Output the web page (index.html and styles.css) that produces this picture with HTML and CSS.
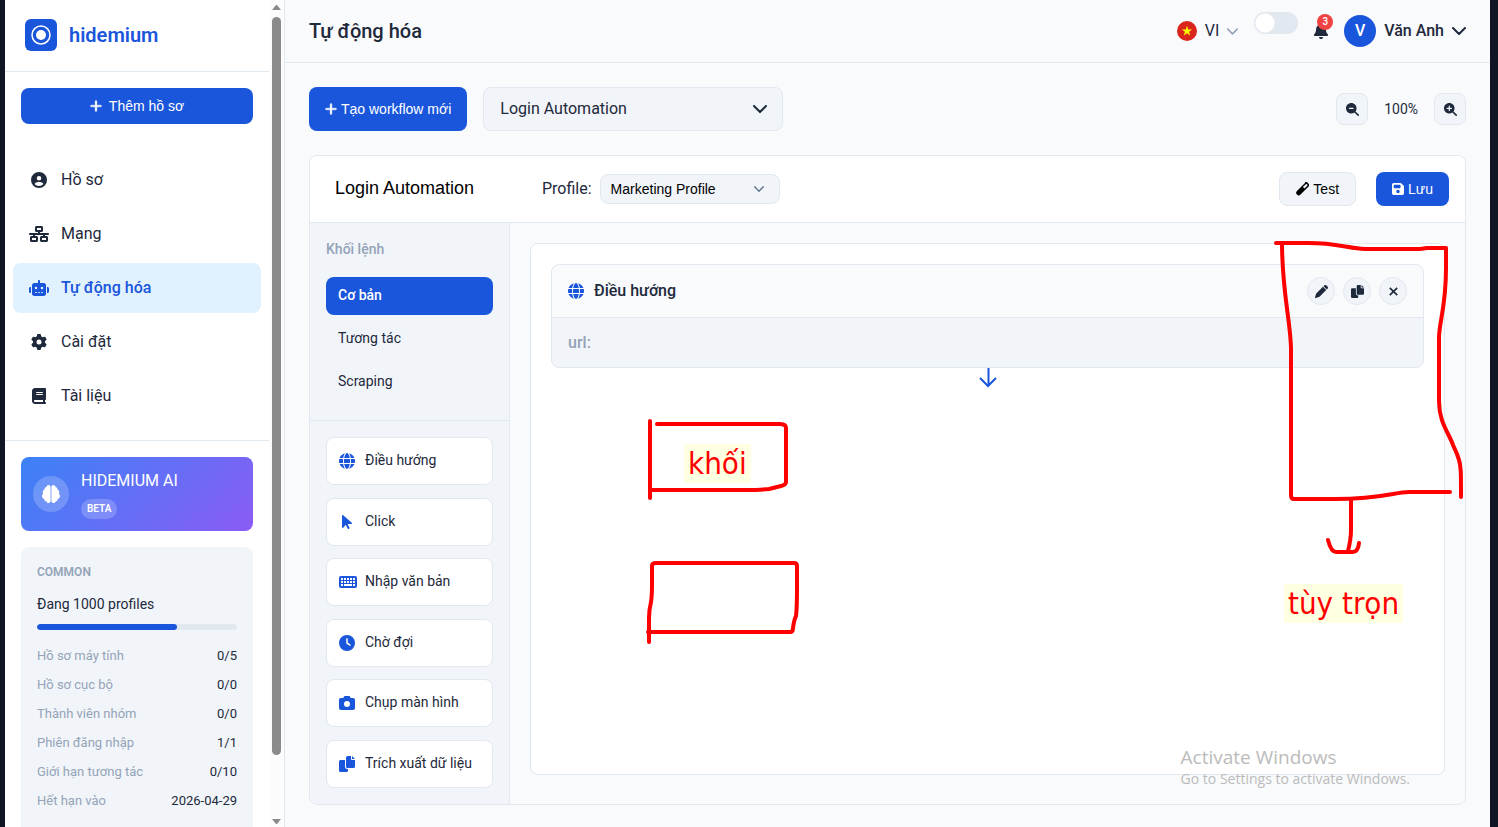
FILE: index.html
```html
<!DOCTYPE html>
<html lang="vi">
<head>
<meta charset="utf-8">
<meta name="viewport" content="width=device-width, initial-scale=1">
<title>Hidemium - Tự động hóa</title>
<link rel="stylesheet" href="styles.css">
</head>
<body>
<svg class="sprite" aria-hidden="true">
  <symbol id="plus" viewBox="0 0 448 512"><path d="M256 80c0-17.700-14.300-32-32-32s-32 14.300-32 32V224H48c-17.700 0-32 14.300-32 32s14.300 32 32 32H192V432c0 17.700 14.300 32 32 32s32-14.300 32-32V288H400c17.700 0 32-14.300 32-32s-14.300-32-32-32H256V80z"/></symbol>
  <symbol id="user" viewBox="0 0 512 512"><path d="M399 384.200C376.900 345.800 335.400 320 288 320H224c-47.400 0-88.900 25.800-111 64.200c35.200 39.200 86.200 63.800 143 63.800s107.800-24.700 143-63.800zM0 256a256 256 0 1 1 512 0A256 256 0 1 1 0 256zm256 16a72 72 0 1 0 0-144 72 72 0 1 0 0 144z"/></symbol>
  <symbol id="network" viewBox="0 0 640 512"><path d="M256 64H384v64H256V64zM240 0c-26.500 0-48 21.500-48 48v96c0 26.500 21.500 48 48 48h48v32H32c-17.700 0-32 14.300-32 32s14.300 32 32 32h96v32H80c-26.500 0-48 21.500-48 48v96c0 26.500 21.500 48 48 48H240c26.500 0 48-21.500 48-48V368c0-26.500-21.500-48-48-48H192V288H448v32H400c-26.500 0-48 21.500-48 48v96c0 26.500 21.500 48 48 48H560c26.500 0 48-21.500 48-48V368c0-26.500-21.500-48-48-48H512V288h96c17.700 0 32-14.300 32-32s-14.300-32-32-32H352V192h48c26.500 0 48-21.500 48-48V48c0-26.500-21.500-48-48-48H240zM96 448V384H224v64H96zm320-64H544v64H416V384z"/></symbol>
  <symbol id="robot" viewBox="0 0 640 512"><path d="M320 0c17.700 0 32 14.300 32 32V96H472c39.800 0 72 32.200 72 72V440c0 39.800-32.200 72-72 72H168c-39.800 0-72-32.200-72-72V168c0-39.800 32.200-72 72-72H288V32c0-17.700 14.300-32 32-32zM208 384c-8.800 0-16 7.200-16 16s7.200 16 16 16h32c8.800 0 16-7.200 16-16s-7.200-16-16-16H208zm96 0c-8.800 0-16 7.200-16 16s7.200 16 16 16h32c8.800 0 16-7.200 16-16s-7.200-16-16-16H304zm96 0c-8.800 0-16 7.200-16 16s7.200 16 16 16h32c8.800 0 16-7.200 16-16s-7.200-16-16-16H400zM264 256a40 40 0 1 0 -80 0 40 40 0 1 0 80 0zm152 40a40 40 0 1 0 0-80 40 40 0 1 0 0 80zM48 224H64V416H48c-26.500 0-48-21.500-48-48V272c0-26.500 21.500-48 48-48zm544 0c26.500 0 48 21.500 48 48v96c0 26.500-21.500 48-48 48H576V224h16z"/></symbol>
  <symbol id="gear" viewBox="0 0 512 512"><path d="M495.900 166.600c3.200 8.700 .5 18.400-6.400 24.600l-43.300 39.400c1.100 8.300 1.700 16.800 1.700 25.400s-.6 17.100-1.700 25.400l43.300 39.400c6.900 6.200 9.600 15.900 6.400 24.600c-4.400 11.900-9.700 23.300-15.800 34.300l-4.700 8.100c-6.600 11-14 21.400-22.100 31.200c-5.900 7.200-15.700 9.600-24.500 6.800l-55.700-17.700c-13.400 10.300-28.200 18.900-44 25.400l-12.500 57.100c-2 9.100-9 16.300-18.200 17.800c-13.800 2.300-28 3.500-42.500 3.500s-28.700-1.200-42.500-3.500c-9.200-1.500-16.200-8.700-18.200-17.800l-12.500-57.100c-15.800-6.500-30.600-15.100-44-25.400L83.100 425.900c-8.800 2.800-18.600 .3-24.500-6.800c-8.100-9.800-15.500-20.200-22.100-31.200l-4.700-8.100c-6.100-11-11.400-22.400-15.800-34.300c-3.200-8.700-.5-18.400 6.400-24.600l43.300-39.400C64.600 273.100 64 264.600 64 256s.6-17.100 1.700-25.400L22.400 191.200c-6.900-6.200-9.600-15.900-6.400-24.600c4.400-11.900 9.700-23.300 15.800-34.300l4.700-8.100c6.600-11 14-21.400 22.100-31.200c5.900-7.200 15.700-9.600 24.500-6.800l55.700 17.700c13.400-10.300 28.200-18.900 44-25.400l12.500-57.100c2-9.100 9-16.300 18.200-17.800C227.300 1.200 241.500 0 256 0s28.700 1.200 42.500 3.500c9.200 1.500 16.200 8.700 18.200 17.800l12.500 57.100c15.800 6.500 30.600 15.100 44 25.400l55.700-17.700c8.800-2.800 18.600-.3 24.500 6.800c8.100 9.800 15.500 20.200 22.100 31.200l4.700 8.100c6.100 11 11.400 22.400 15.800 34.300zM256 336a80 80 0 1 0 0-160 80 80 0 1 0 0 160z"/></symbol>
  <symbol id="book" viewBox="0 0 448 512"><path d="M96 0C43 0 0 43 0 96V416c0 53 43 96 96 96H384h32c17.700 0 32-14.300 32-32s-14.300-32-32-32V384c17.700 0 32-14.300 32-32V32c0-17.700-14.300-32-32-32H384 96zm0 384H352v64H96c-17.700 0-32-14.300-32-32s14.300-32 32-32zm32-240c0-8.800 7.200-16 16-16H336c8.800 0 16 7.200 16 16s-7.200 16-16 16H144c-8.800 0-16-7.200-16-16zm16 48H336c8.800 0 16 7.200 16 16s-7.200 16-16 16H144c-8.800 0-16-7.200-16-16s7.200-16 16-16z"/></symbol>
  <symbol id="brain" viewBox="0 0 512 512"><path d="M190 0c28 0 54 22 54 56v400c0 34-26 56-54 56-32 0-56-16-64-44-36-4-64-32-66-68-34-14-60-48-60-88 0-28 12-50 30-66-6-12-8-24-8-36 0-36 18-66 48-80 0-34 22-60 54-70 12-36 34-60 66-60zM322 0c-28 0-54 22-54 56v400c0 34 26 56 54 56 32 0 56-16 64-44 36-4 64-32 66-68 34-14 60-48 60-88 0-28-12-50-30-66 6-12 8-24 8-36 0-36-18-66-48-80 0-34-22-60-54-70-12-36-34-60-66-60z"/></symbol>
  <symbol id="bell" viewBox="0 0 448 512"><path d="M224 0c-17.700 0-32 14.300-32 32V51.200C119 66 64 130.600 64 208v18.800c0 47-17.300 92.400-48.500 127.600l-7.400 8.300c-8.400 9.400-10.400 22.900-5.300 34.400S19.400 416 32 416H416c12.600 0 24-7.400 29.200-18.900s3.100-25-5.300-34.400l-7.400-8.300C401.300 319.200 384 273.900 384 226.800V208c0-77.400-55-142-128-156.800V32c0-17.700-14.300-32-32-32zm45.300 493.300c12-12 18.700-28.300 18.700-45.300H224 160c0 17 6.700 33.300 18.700 45.300s28.300 18.700 45.300 18.700s33.300-6.700 45.300-18.700z"/></symbol>
  <symbol id="globe" viewBox="0 0 512 512"><path d="M352 256c0 22.200-1.200 43.600-3.300 64H163.300c-2.200-20.400-3.300-41.800-3.300-64s1.200-43.600 3.300-64H348.700c2.200 20.400 3.300 41.800 3.300 64zm28.800-64H503.900c5.300 20.500 8.100 41.900 8.100 64s-2.800 43.500-8.100 64H380.800c2.100-20.600 3.200-42 3.200-64s-1.100-43.400-3.200-64zm112.600-32H376.700c-10-63.900-29.800-117.400-55.300-151.600c78.300 20.700 142 77.500 171.900 151.600zm-149.100 0H167.700c6.100-36.400 15.500-68.600 27-94.700c10.500-23.600 22.200-40.700 33.500-51.500C239.400 3.200 248.700 0 256 0s16.600 3.200 27.800 13.800c11.300 10.800 23 27.900 33.500 51.500c11.600 26 20.900 58.200 27 94.700zm-209 0H18.600C48.600 85.900 112.200 29.100 190.600 8.400C165.100 42.600 145.300 96.100 135.300 160zM8.100 192H131.200c-2.100 20.600-3.200 42-3.200 64s1.100 43.400 3.200 64H8.100C2.800 299.500 0 278.100 0 256s2.800-43.500 8.100-64zM194.700 446.600c-11.600-26-20.900-58.200-27-94.600H344.300c-6.100 36.400-15.500 68.600-27 94.600c-10.500 23.600-22.200 40.700-33.500 51.500C272.600 508.800 263.300 512 256 512s-16.600-3.200-27.800-13.800c-11.300-10.800-23-27.900-33.500-51.500zM135.300 352c10 63.900 29.800 117.400 55.300 151.600C112.200 482.900 48.600 426.100 18.600 352H135.300zm358.100 0c-30 74.100-93.600 130.900-171.900 151.600c25.500-34.200 45.200-87.700 55.300-151.600H493.400z"/></symbol>
  <symbol id="pointer" viewBox="0 0 320 512"><path d="M0 55.200V426c0 12.200 9.900 22 22 22c6.300 0 12.400-2.700 16.600-7.500L121.200 346l58.100 116.300c7.900 15.800 27.100 22.200 42.900 14.300s22.200-27.100 14.300-42.900L179.800 320H297.900c12.200 0 22.100-9.900 22.100-22.100c0-6.300-2.700-12.300-7.400-16.500L38.600 37.900C34.300 34.100 28.900 32 23.200 32C10.400 32 0 42.400 0 55.200z"/></symbol>
  <symbol id="keyboard" viewBox="0 0 18 16"><path fill-rule="evenodd" d="M2 2h14a2 2 0 0 1 2 2v8a2 2 0 0 1-2 2H2a2 2 0 0 1-2-2V4a2 2 0 0 1 2-2zM2 4v2h2V4zM5 4v2h2V4zM8 4v2h2V4zM11 4v2h2V4zM14 4v2h2V4zM2 7v2h2V7zM5 7v2h2V7zM8 7v2h2V7zM11 7v2h2V7zM14 7v2h2V7zM2 10v2h2v-2zM5 10v2h8v-2zM14 10v2h2v-2z"/></symbol>
  <symbol id="clock" viewBox="0 0 512 512"><path d="M256 0a256 256 0 1 1 0 512A256 256 0 1 1 256 0zM232 120V256c0 8 4 15.500 10.700 20l96 64c11 7.400 25.900 4.400 33.300-6.700s4.400-25.900-6.700-33.300L280 243.200V120c0-13.300-10.700-24-24-24s-24 10.700-24 24z"/></symbol>
  <symbol id="camera" viewBox="0 0 512 512"><path d="M149.100 64.800L138.700 96H64C28.700 96 0 124.700 0 160V416c0 35.300 28.700 64 64 64H448c35.300 0 64-28.700 64-64V160c0-35.300-28.700-64-64-64H373.300L362.900 64.800C356.400 45.200 338.100 32 317.400 32H194.600c-20.700 0-39 13.200-45.500 32.800zM256 192a96 96 0 1 1 0 192 96 96 0 1 1 0-192z"/></symbol>
  <symbol id="copy" viewBox="0 0 512 512"><path d="M272 0h112v96q0 32 32 32h96v208q0 48-48 48H272q-48 0-48-48V48q0-48 48-48zM416 0v96h96zM48 128h144v208q0 80 80 80h16v48q0 48-48 48H48q-48 0-48-48V176q0-48 48-48z"/></symbol>
  <symbol id="zoom-out" viewBox="0 0 512 512"><path d="M416 208c0 45.900-14.900 88.300-40 122.700L502.600 457.400c12.500 12.500 12.500 32.800 0 45.300s-32.800 12.500-45.300 0L330.700 376c-34.400 25.200-76.800 40-122.700 40C93.100 416 0 322.900 0 208S93.100 0 208 0S416 93.100 416 208zM136 184c-13.300 0-24 10.700-24 24s10.700 24 24 24H280c13.300 0 24-10.700 24-24s-10.700-24-24-24H136z"/></symbol>
  <symbol id="zoom-in" viewBox="0 0 512 512"><path d="M416 208c0 45.900-14.900 88.300-40 122.700L502.600 457.400c12.500 12.500 12.500 32.800 0 45.300s-32.800 12.500-45.300 0L330.700 376c-34.400 25.200-76.800 40-122.700 40C93.100 416 0 322.900 0 208S93.100 0 208 0S416 93.100 416 208zM184 296c0 13.300 10.700 24 24 24s24-10.700 24-24V232h64c13.300 0 24-10.700 24-24s-10.700-24-24-24H232V120c0-13.300-10.700-24-24-24s-24 10.700-24 24v64H120c-13.300 0-24 10.700-24 24s10.700 24 24 24h64v64z"/></symbol>
  <symbol id="save" viewBox="0 0 448 512"><path d="M64 32C28.700 32 0 60.700 0 96V416c0 35.300 28.700 64 64 64H384c35.300 0 64-28.700 64-64V173.300c0-17-6.700-33.300-18.700-45.300L352 50.700C340 38.700 323.700 32 306.700 32H64zm0 96c0-17.700 14.300-32 32-32H288c17.700 0 32 14.300 32 32v64c0 17.700-14.300 32-32 32H96c-17.700 0-32-14.300-32-32V128zM224 288a64 64 0 1 1 0 128 64 64 0 1 1 0-128z"/></symbol>
  <symbol id="vial" viewBox="0 0 512 512"><g transform="rotate(45 256 256)"><path fill-rule="evenodd" d="M156-60h200a32 32 0 0 1 0 64v460a100 100 0 0 1-200 0V4a32 32 0 0 1 0-64zM216 4v186h80V4z"/></g></symbol>
  <symbol id="pencil" viewBox="0 0 512 512"><path d="M362.700 19.300L334.300 47.700 464.300 177.700l28.400-28.400c25-25 25-65.500 0-90.500L453.300 19.300c-25-25-65.500-25-90.500 0zM312 70L58.600 323.500c-10.400 10.400-18 23.300-22.200 37.400L1 481.200C-1.500 489.700 .8 498.800 7 505s15.300 8.500 23.700 6.100l120.300-35.400c14.100-4.200 27-11.800 37.400-22.200L442 200z"/></symbol>
  <symbol id="chevron" viewBox="0 0 14 8"><path d="M1 1l6 6 6-6" fill="none" stroke="currentColor" stroke-width="2" stroke-linecap="round" stroke-linejoin="round"/></symbol>
</svg>

<div class="app">
  <aside class="sidebar">
    <div class="sidebar-body">
      <div class="brand">
        <svg class="logo" viewBox="0 0 32 32" aria-hidden="true"><rect width="32" height="32" rx="6" fill="#1a56db"/><circle cx="16" cy="16" r="9" fill="none" stroke="#fff" stroke-width="1.500"/><circle cx="16" cy="16" r="5" fill="#fff"/></svg>
        <span>hidemium</span>
      </div>
      <div class="add">
        <button class="primary add-button" type="button"><svg class="icon"><use href="#plus"/></svg>Thêm hồ sơ</button>
      </div>
      <nav class="nav">
        <a href="#ho-so"><svg class="icon"><use href="#user"/></svg>Hồ sơ</a>
        <a href="#mang"><svg class="icon"><use href="#network"/></svg>Mạng</a>
        <a href="#tu-dong-hoa" class="active"><svg class="icon"><use href="#robot"/></svg>Tự động hóa</a>
        <a href="#cai-dat"><svg class="icon"><use href="#gear"/></svg>Cài đặt</a>
        <a href="#tai-lieu"><svg class="icon"><use href="#book"/></svg>Tài liệu</a>
      </nav>
      <div class="cards">
        <div class="ai">
          <span class="ai-icon"><svg class="icon"><use href="#brain"/></svg></span>
          <div><div class="ai-title">HIDEMIUM AI</div><span class="beta">BETA</span></div>
        </div>
        <section class="plan">
          <h2>COMMON</h2>
          <p>Đang 1000 profiles</p>
          <div class="bar"><div class="fill" style="width:70%"></div></div>
          <dl>
            <div><dt>Hồ sơ máy tính</dt><dd>0/5</dd></div>
            <div><dt>Hồ sơ cục bộ</dt><dd>0/0</dd></div>
            <div><dt>Thành viên nhóm</dt><dd>0/0</dd></div>
            <div><dt>Phiên đăng nhập</dt><dd>1/1</dd></div>
            <div><dt>Giới hạn tương tác</dt><dd>0/10</dd></div>
            <div><dt>Hết hạn vào</dt><dd>2026-04-29</dd></div>
          </dl>
        </section>
      </div>
    </div>
    <div class="scrollbar" aria-hidden="true">
      <svg viewBox="0 0 9 5"><path d="M0 5h9L5 0H4z"/></svg>
      <div class="track"><div class="thumb"></div></div>
      <svg viewBox="0 0 9 5"><path d="M0 0h9L5 5H4z"/></svg>
    </div>
  </aside>

  <main class="main">
    <header class="topbar">
      <h1>Tự động hóa</h1>
      <div class="tools">
        <button class="plain" type="button">
          <svg class="flag" viewBox="0 0 20 20" aria-hidden="true"><circle cx="10" cy="10" r="10" fill="#da251d"/><path fill="#ff0" d="M10 4.700l1.250 3.700h3.900L12 10.700l1.200 3.800L10 12.200l-3.200 2.300L8 10.700 4.850 8.400h3.900z"/></svg>
          VI<svg class="chev-s"><use href="#chevron"/></svg>
        </button>
        <input class="switch" type="checkbox" role="switch" aria-label="Chế độ tối">
        <button class="plain bell" type="button" aria-label="Thông báo"><svg><use href="#bell"/></svg><span class="badge">3</span></button>
        <button class="plain account" type="button"><span class="avatar">V</span>Văn Anh<svg class="chev-m"><use href="#chevron"/></svg></button>
      </div>
    </header>

    <div class="content">
      <div class="toolbar">
        <button class="primary create" type="button"><svg class="icon"><use href="#plus"/></svg>Tạo workflow mới</button>
        <div class="select workflow">
          <select aria-label="Workflow"><option>Login Automation</option></select>
          <svg class="chev-m"><use href="#chevron"/></svg>
        </div>
        <div class="zoom">
          <button type="button" aria-label="Thu nhỏ"><svg><use href="#zoom-out"/></svg></button>
          <span>100%</span>
          <button type="button" aria-label="Phóng to"><svg><use href="#zoom-in"/></svg></button>
        </div>
      </div>

      <section class="editor">
        <div class="editor-head">
          <input class="name" type="text" value="Login Automation" aria-label="Tên workflow">
          <label for="profile">Profile:</label>
          <div class="select profile">
            <select id="profile"><option>Marketing Profile</option></select>
            <svg class="chev-s"><use href="#chevron"/></svg>
          </div>
          <div class="actions">
            <button class="test" type="button"><svg class="icon"><use href="#vial"/></svg>Test</button>
            <button class="primary save" type="button"><svg class="icon"><use href="#save"/></svg>Lưu</button>
          </div>
        </div>
        <div class="editor-body">
          <div class="palette">
            <div class="groups">
              <h2>Khối lệnh</h2>
              <button class="active" type="button">Cơ bản</button>
              <button type="button">Tương tác</button>
              <button type="button">Scraping</button>
            </div>
            <div class="blocks">
              <button type="button"><svg class="icon"><use href="#globe"/></svg>Điều hướng</button>
              <button type="button"><svg class="icon"><use href="#pointer"/></svg>Click</button>
              <button type="button"><svg class="icon wide"><use href="#keyboard"/></svg>Nhập văn bản</button>
              <button type="button"><svg class="icon"><use href="#clock"/></svg>Chờ đợi</button>
              <button type="button"><svg class="icon"><use href="#camera"/></svg>Chụp màn hình</button>
              <button type="button"><svg class="icon"><use href="#copy"/></svg>Trích xuất dữ liệu</button>
            </div>
          </div>
          <div class="stage">
            <div class="canvas">
              <article class="node">
                <div class="node-head">
                  <svg class="icon"><use href="#globe"/></svg>
                  <h3>Điều hướng</h3>
                  <button type="button" aria-label="Sửa"><svg><use href="#pencil"/></svg></button>
                  <button type="button" aria-label="Sao chép"><svg><use href="#copy"/></svg></button>
                  <button type="button" aria-label="Xóa"><svg viewBox="0 0 14 14"><path d="M3 3l8 8M11 3l-8 8" stroke="currentColor" stroke-width="1.800"/></svg></button>
                </div>
                <div class="node-body">url:</div>
              </article>
              <svg class="arrow" viewBox="0 0 18 20" aria-hidden="true"><path d="M9.500 0v18M1 10l8 8 8-8" fill="none" stroke="#1a56db" stroke-width="2"/></svg>
            </div>
          </div>
        </div>
      </section>
    </div>
  </main>

  <svg class="ink" aria-hidden="true">
    <path d="M650 421V498M657 424H780q6 0 6 4v54q0 3-5 4l-12 3q-8 1-24 1H651"/>
    <path d="M649 642v-24q0-8 2-16 1-6 1-18v-18q0-3 4-3h138q3 0 3 3v22q0 20-1 28-2 4-3 12 0 4-3 4H648"/>
    <path d="M1276 243h32c32 0 40 6 62 6h50l7-1h19v20c0 40-7 54-7 70v63c0 22 10 32 14 44l4 9 2 6c2 6 2 12 2 37M1282 243c0 50 9 80 9 107v145q0 4 3 4h40c50 0 60-7 75-7h41"/>
    <path d="M1351 500v30q0 9-3 21M1328 540q3 12 8 12h17q5 0 6-9"/>
  </svg>
  <span class="note note-block">khối</span>
  <span class="note note-option">tùy trọn</span>
  <div class="watermark"><div>Activate Windows</div><p>Go to Settings to activate Windows.</p></div>
</div>
</body>
</html>
```
FILE: styles.css
```css
:root {
  --blue: #1a56db;
  --ink: #1e293b;
  --muted: #94a3b8;
  --line: #e2e8f0;
  --soft: #f1f5f9;
  --page: #f8fafc;
}
* { box-sizing: border-box; }
body {
  margin: 0;
  background: #0f1523;
  color: var(--ink);
  font: 16px/24px Roboto, "Open Sans", sans-serif;
}
h1, h2, h3, p, dl, dd { margin: 0; }
button, select, input { font: inherit; color: inherit; }
button {
  display: flex;
  align-items: center;
  border: 0;
  background: none;
  padding: 0;
  cursor: pointer;
}
svg { display: block; fill: currentColor; flex: none; }
.sprite { display: none; }

.app {
  position: relative;
  display: grid;
  grid-template-columns: 280px 1fr;
  height: 100vh;
  padding: 0 8px 0 5px;
  overflow: hidden;
}
.primary {
  justify-content: center;
  background: var(--blue);
  color: #fff;
  border-radius: 8px;
  font: 14px/20px "Liberation Sans", Arial, sans-serif;
}
.icon { width: 16px; height: 16px; }

/* Sidebar */
.sidebar {
  display: grid;
  grid-template-columns: 1fr 15px;
  min-height: 0;
  background: #fff;
  border-right: 1px solid var(--line);
}
.sidebar-body { overflow: hidden; }
.brand {
  display: flex;
  align-items: center;
  gap: 12px;
  padding: 19px 20px 20px;
  border-bottom: 1px solid var(--line);
  color: var(--blue);
  font-size: 20px;
  font-weight: 600;
}
.logo { width: 32px; height: 32px; }
.add { padding: 16px; }
.add-button { width: 100%; height: 36px; gap: 7px; }
.nav {
  display: flex;
  flex-direction: column;
  gap: 4px;
  padding: 15px 8px 19px;
  border-bottom: 1px solid var(--line);
}
.nav a {
  display: flex;
  align-items: center;
  gap: 12px;
  padding: 13px 16px;
  border-radius: 8px;
  color: inherit;
  text-decoration: none;
}
.nav .icon { width: 20px; }
.nav .active { background: #e1f1fe; color: var(--blue); font-weight: 500; }
.cards { display: grid; gap: 16px; padding: 16px; }
.ai {
  display: flex;
  align-items: center;
  gap: 12px;
  padding: 12px;
  border-radius: 8px;
  background: linear-gradient(135deg, #3b82f6, #8b5cf6);
  color: #fff;
}
.ai-icon {
  display: grid;
  place-items: center;
  width: 36px;
  height: 36px;
  border-radius: 50%;
  background: rgba(255, 255, 255, .2);
}
.ai-icon .icon { width: 18px; height: 18px; }
.ai-title { margin-bottom: 6px; }
.beta {
  display: block;
  width: max-content;
  padding: 0 6px;
  border-radius: 10px;
  background: rgba(255, 255, 255, .2);
  font-size: 10px;
  line-height: 20px;
  font-weight: 600;
}
.plan { padding: 16px 16px 32px; border-radius: 8px; background: var(--soft); }
.plan h2 { color: var(--muted); font-size: 12px; line-height: 18px; font-weight: 600; }
.plan p { margin: 12px 0 9px; font-size: 14px; line-height: 22px; }
.bar { height: 6px; border-radius: 3px; background: var(--line); overflow: hidden; }
.fill { height: 100%; border-radius: 3px; background: var(--blue); }
.plan dl { display: grid; gap: 8px; margin-top: 15px; font-size: 13px; line-height: 21px; }
.plan dl div { display: flex; justify-content: space-between; }
.plan dt { color: var(--muted); }
.scrollbar {
  display: flex;
  flex-direction: column;
  align-items: center;
  padding: 5px 0 3px;
  background: #fcfcfc;
  color: #8b8b8b;
}
.scrollbar svg { width: 9px; height: 5px; }
.track { flex: 1; padding: 7px 0 0; }
.thumb { width: 9px; height: 92%; border-radius: 5px; background: #8b8b8b; }

/* Top bar */
.main { display: flex; flex-direction: column; min-width: 0; background: var(--page); }
.topbar {
  display: flex;
  justify-content: space-between;
  align-items: center;
  padding: 12px 24px;
  border-bottom: 1px solid var(--line);
}
.topbar h1 { font-size: 20px; line-height: 38px; font-weight: 500; }
.tools { display: flex; align-items: center; gap: 16px; height: 38px; }
.plain { gap: 8px; }
.flag { width: 20px; height: 20px; }
.chev-s { width: 11px; height: 7px; color: var(--muted); }
.chev-m { width: 14px; height: 8px; }
.switch {
  appearance: none;
  align-self: flex-start;
  width: 44px;
  height: 22px;
  margin: 0;
  border-radius: 11px;
  background: radial-gradient(circle at 11px 11px, #fff 9px, transparent 10px) var(--line);
}
.bell { position: relative; }
.bell svg { width: 14px; height: 16px; }
.badge {
  position: absolute;
  left: 3px;
  bottom: 9px;
  width: 16px;
  border-radius: 50%;
  background: #ef4444;
  color: #fff;
  font-size: 10px;
  line-height: 16px;
  font-weight: 500;
  text-align: center;
}
.account { font-weight: 500; }
.avatar {
  width: 32px;
  border-radius: 50%;
  background: var(--blue);
  color: #fff;
  line-height: 32px;
  text-align: center;
}

/* Toolbar */
.content {
  display: flex;
  flex: 1;
  flex-direction: column;
  gap: 24px;
  min-height: 0;
  padding: 24px 24px 22px;
}
.toolbar { display: flex; align-items: center; gap: 16px; }
.create { height: 44px; padding: 0 16px; gap: 4px; }
.create .icon, .add-button .icon, .actions .icon { width: 12px; height: 14px; }
.create .icon path, .add-button .icon path { stroke: currentColor; }
.create .icon, .add-button .icon { stroke: currentColor; stroke-width: 16; }
.select { position: relative; }
.select select {
  appearance: none;
  width: 100%;
  border: 1px solid var(--line);
  border-radius: 8px;
  background: var(--soft);
}
.select svg { position: absolute; top: 50%; translate: 0 -50%; pointer-events: none; }
.workflow { width: 300px; }
.workflow select { height: 44px; padding: 0 16px; }
.workflow svg { right: 16px; }
.zoom { display: flex; align-items: center; gap: 16px; margin-left: auto; font-size: 14px; }
.zoom button {
  justify-content: center;
  width: 32px;
  height: 32px;
  border: 1px solid var(--line);
  border-radius: 8px;
  background: var(--soft);
}
.zoom svg { width: 13px; height: 13px; }

/* Editor */
.editor {
  display: flex;
  flex: 1;
  flex-direction: column;
  min-height: 0;
  border: 1px solid var(--line);
  border-radius: 8px;
  overflow: hidden;
}
.editor-head {
  display: flex;
  align-items: center;
  padding: 16px;
  border-bottom: 1px solid var(--line);
  background: #fff;
}
.name {
  width: 200px;
  margin-right: 16px;
  padding: 0 9px 2px;
  border: 0;
  background: none;
  color: #000;
  font: 18px/32px "Liberation Sans", Arial, sans-serif;
}
.profile { width: 180px; margin-left: 8px; }
.profile select {
  height: 30px;
  padding: 0 10px;
  color: #000;
  font: 14px/20px "Liberation Sans", Arial, sans-serif;
}
.profile svg { right: 16px; width: 10px; height: 6px; color: #64748b; }
.actions { display: flex; gap: 20px; margin-left: auto; }
.actions button { height: 34px; padding: 0 16px; gap: 4px; }
.test {
  border: 1px solid var(--line);
  border-radius: 8px;
  background: var(--soft);
  color: #000;
  font: 14px/20px "Liberation Sans", Arial, sans-serif;
}
.actions .test .icon { width: 13px; }
.editor-body { display: grid; flex: 1; grid-template-columns: 200px 1fr; min-height: 0; }
.palette {
  display: flex;
  flex-direction: column;
  border-right: 1px solid var(--line);
  background: var(--soft);
  font-size: 14px;
}
.groups {
  display: grid;
  gap: 5px;
  padding: 16px 16px 19px;
  border-bottom: 1px solid var(--line);
}
.groups h2 { margin-bottom: 12px; color: var(--muted); font-size: 14px; line-height: 21px; font-weight: 500; }
.groups button { height: 38px; padding: 0 12px 3px; border-radius: 8px; }
.groups .active { background: var(--blue); color: #fff; font-weight: 500; }
.blocks { display: flex; flex: 1; flex-direction: column; justify-content: space-between; padding: 16px; }
.blocks button {
  height: 48px;
  padding: 0 12px 2px;
  gap: 10px;
  border: 1px solid var(--line);
  border-radius: 8px;
  background: #fff;
}
.blocks .icon { margin-top: 2px; color: var(--blue); }
.blocks .wide { width: 18px; margin-right: -2px; }
.stage { display: flex; padding: 20px 20px 29px; }
.canvas { flex: 1; padding: 20px; border: 1px solid var(--line); border-radius: 8px; background: #fff; }
.node { border: 1px solid var(--line); border-radius: 8px; background: var(--soft); overflow: hidden; }
.node-head {
  display: flex;
  align-items: center;
  gap: 8px;
  padding: 12px 16px;
  border-bottom: 1px solid var(--line);
  background: var(--page);
}
.node-head .icon { margin-right: 2px; color: var(--blue); }
.node-head h3 { margin-right: auto; font-size: 16px; line-height: 24px; font-weight: 500; }
.node-head button {
  justify-content: center;
  width: 28px;
  height: 28px;
  border: 1px solid var(--line);
  border-radius: 50%;
  background: var(--soft);
}
.node-head button svg { width: 13px; height: 13px; }
.node-body { padding: 13px 16px 12px; color: var(--muted); font-weight: 500; }
.arrow { width: 18px; height: 20px; margin: 0 auto; }

/* Freehand notes drawn over the window */
.ink {
  position: absolute;
  inset: 0;
  width: 100%;
  height: 100%;
  fill: none;
  stroke: #f00;
  stroke-width: 4;
  stroke-linecap: round;
  stroke-linejoin: round;
  pointer-events: none;
}
.note {
  position: absolute;
  padding: 0 4px;
  background: #ffffe1;
  color: #f00;
  font: 31px/39px "DejaVu Sans Condensed", "DejaVu Sans", sans-serif;
}
.note-block { left: 684px; top: 444px; }
.note-option { left: 1284px; top: 584px; }
.watermark {
  position: absolute;
  right: 88px;
  bottom: 38px;
  color: #bbb;
  font: 19px/24px "Open Sans", sans-serif;
}
.watermark p { font-size: 14px; line-height: 20px; }
```
